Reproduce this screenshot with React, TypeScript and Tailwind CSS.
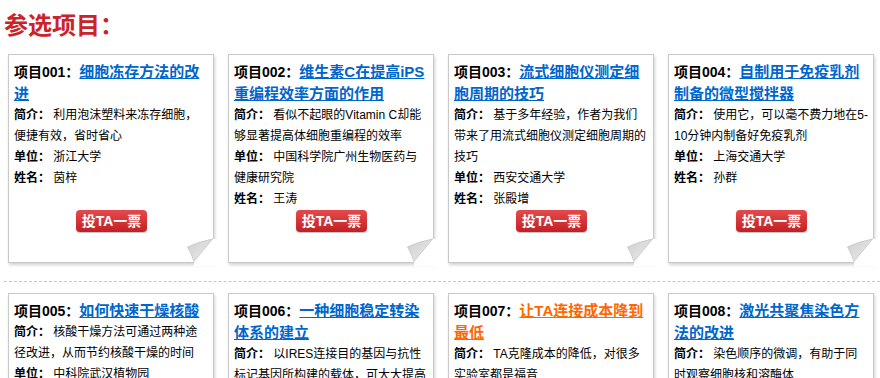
type Project = {
	no: string;
	title: string;
	intro: string;
	unit: string;
	name: string;
	hot?: boolean;
};

const rowOne: Project[] = [
	{ no: "001", title: "细胞冻存方法的改进", intro: "利用泡沫塑料来冻存细胞，便捷有效，省时省心", unit: "浙江大学", name: "茵梓" },
	{ no: "002", title: "维生素C在提高iPS重编程效率方面的作用", intro: "看似不起眼的Vitamin C却能够显著提高体细胞重编程的效率", unit: "中国科学院广州生物医药与健康研究院", name: "王涛" },
	{ no: "003", title: "流式细胞仪测定细胞周期的技巧", intro: "基于多年经验，作者为我们带来了用流式细胞仪测定细胞周期的技巧", unit: "西安交通大学", name: "张殿增" },
	{ no: "004", title: "自制用于免疫乳剂制备的微型搅拌器", intro: "使用它，可以毫不费力地在5-10分钟内制备好免疫乳剂", unit: "上海交通大学", name: "孙群" },
];

const rowTwo: Project[] = [
	{ no: "005", title: "如何快速干燥核酸", intro: "核酸干燥方法可通过两种途径改进，从而节约核酸干燥的时间", unit: "中科院武汉植物园", name: "李明" },
	{ no: "006", title: "一种细胞稳定转染体系的建立", intro: "以IRES连接目的基因与抗性标记基因所构建的载体，可大大提高筛选效率", unit: "复旦大学", name: "陈晨" },
	{ no: "007", title: "让TA连接成本降到最低", intro: "TA克隆成本的降低，对很多实验室都是福音", unit: "南京大学", name: "刘洋", hot: true },
	{ no: "008", title: "激光共聚焦染色方法的改进", intro: "染色顺序的微调，有助于同时观察细胞核和溶酶体", unit: "北京大学", name: "赵欣" },
];

const PageCurl = () => (
	<svg className="absolute -right-[4px] -bottom-[4px]" width="32" height="30" viewBox="0 0 32 30">
		<defs>
			<linearGradient id="curl" x1="0" y1="0" x2="1" y2="1">
				<stop offset="0" stopColor="#cfcfcf" />
				<stop offset="1" stopColor="#ececec" />
			</linearGradient>
		</defs>
		<polygon points="27.5,3 32,3 32,30 9,30 9,25.5" fill="#fff" />
		<path d="M27.5 3 Q14 5.5 2.5 11 Q6.5 17.5 9 25.5 Z" fill="url(#curl)" stroke="#c4c4c4" strokeWidth="0.8" />
	</svg>
);

const ProjectCard = ({ p }: { p: Project }) => (
	<div className="relative w-[206px] h-[209px] border border-[#c9c9c9] bg-white pl-[5px] pr-[4px] pt-[6px] shadow-[1px_2px_3px_rgba(0,0,0,0.18)]">
		<div className="h-[149px] text-black">
			<p className="text-[14px] leading-[22px] font-bold">
				项目{p.no}：
				<a href="#" className={`text-[15px] underline ${p.hot ? "text-[#ff6600]" : "text-[#0066cc]"}`}>
					{p.title}
				</a>
			</p>
			<p className="text-[12px] leading-[21px]">
				<b>简介：</b> {p.intro}
			</p>
			<p className="text-[12px] leading-[21px]">
				<b>单位：</b> {p.unit}
			</p>
			<p className="text-[12px] leading-[21px]">
				<b>姓名：</b> {p.name}
			</p>
		</div>
		<div className="flex justify-center">
			<button className="w-[71px] h-[22px] rounded-[4px] bg-gradient-to-b from-[#e4494b] to-[#c41e23] text-white text-[14px] font-bold leading-[22px] shadow-[0_1px_1px_rgba(0,0,0,0.25)]">
				投TA一票
			</button>
		</div>
		<PageCurl />
	</div>
);

export default function App() {
	return (
		<div className="w-[880px] h-[378px] overflow-hidden bg-white font-['Liberation_Sans','Noto_Sans_CJK_SC',sans-serif]">
			<h2 className="pl-[4px] pt-[13px] mb-[15px] text-[24px] leading-[26px] font-bold text-[#cc2229]">参选项目：</h2>
			<div className="flex gap-[14px] pl-[8px]">
				{rowOne.map((p) => (
					<ProjectCard key={p.no} p={p} />
				))}
			</div>
			<div className="ml-[4px] mt-[18px] border-t border-dashed border-[#c8c8c8]" />
			<div className="flex gap-[14px] pl-[8px] mt-[11px]">
				{rowTwo.map((p) => (
					<ProjectCard key={p.no} p={p} />
				))}
			</div>
		</div>
	);
}
